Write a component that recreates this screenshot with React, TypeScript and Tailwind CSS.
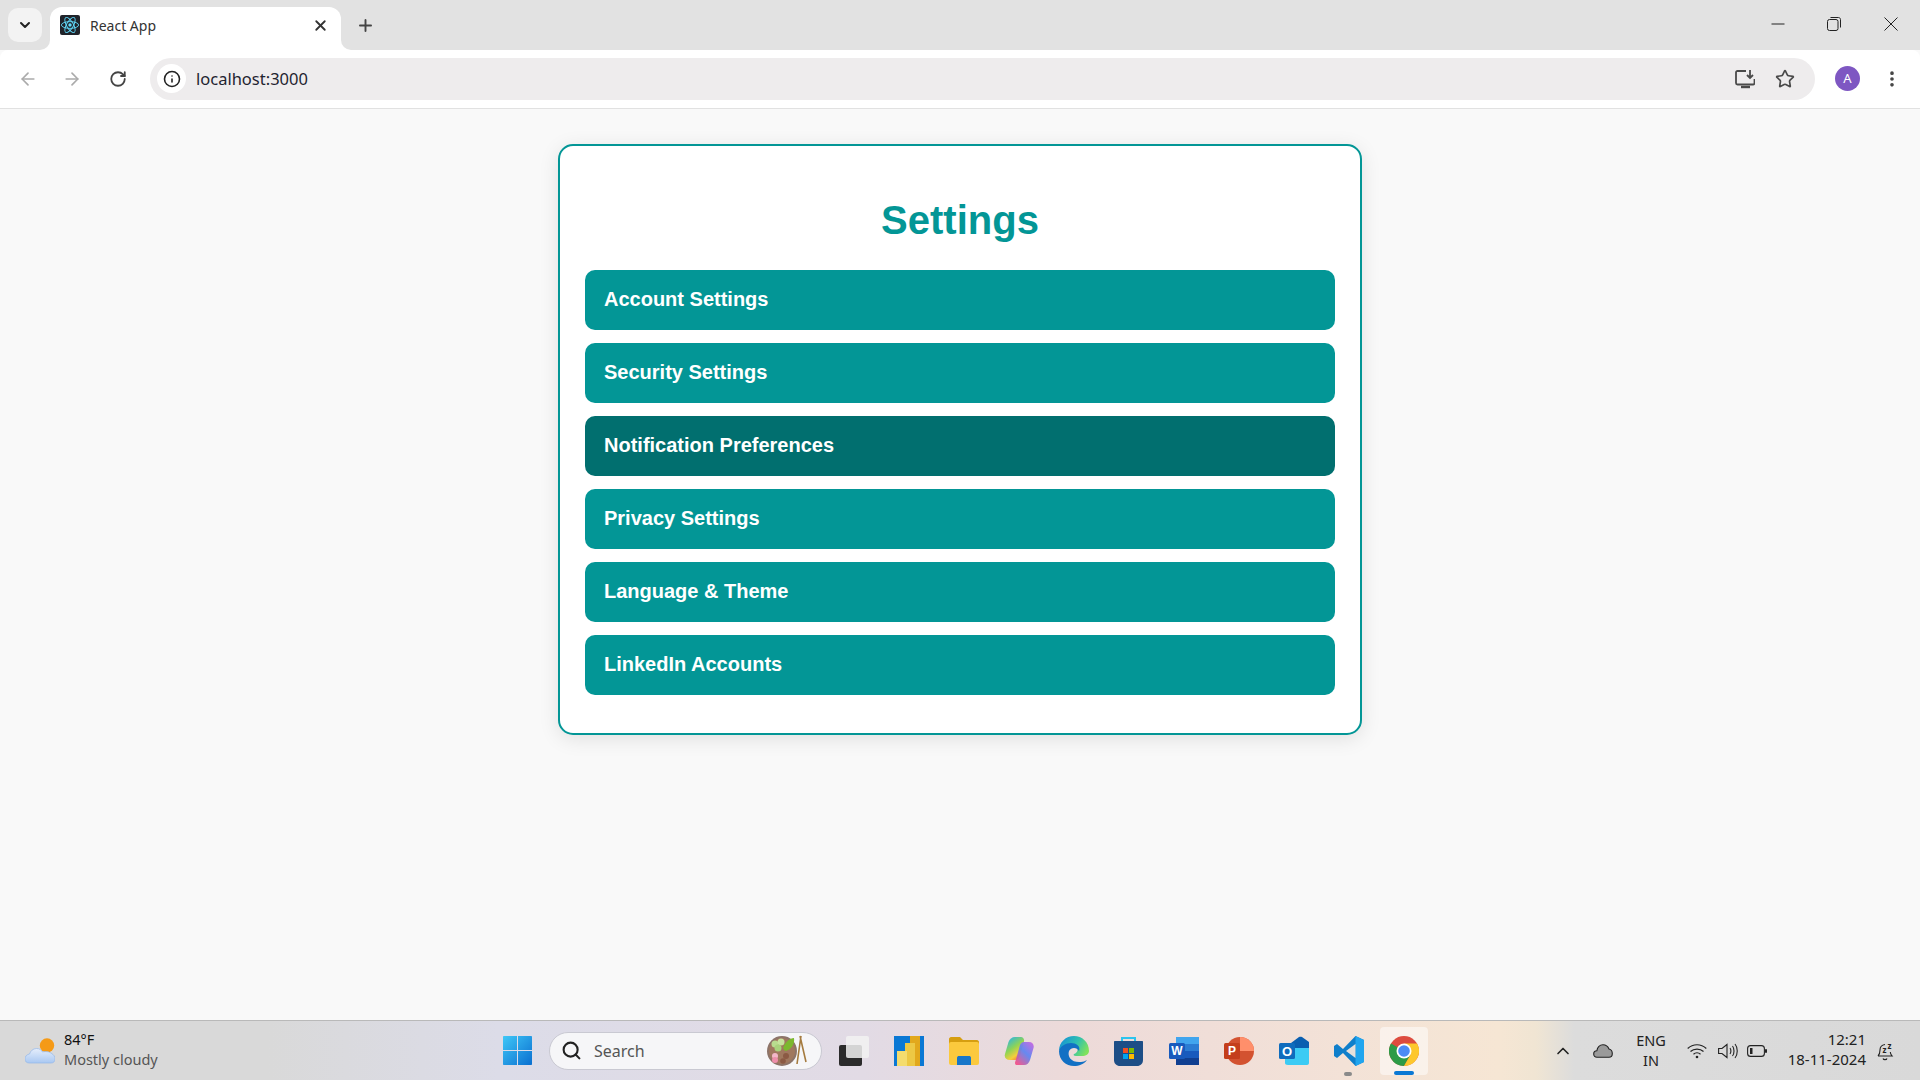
import { ArrowLeft, ArrowRight, ChevronDown, ChevronUp, EllipsisVertical, Info, Plus, RotateCw, Search, Star, X } from "lucide-react";

const settingsItems = [
  "Account Settings",
  "Security Settings",
  "Notification Preferences",
  "Privacy Settings",
  "Language & Theme",
  "LinkedIn Accounts",
];

function ReactIcon() {
  return (
    <svg width="20" height="20" viewBox="0 0 20 20" className="rounded-[2px] bg-[#20232a]">
      <g fill="none" stroke="#61dafb" strokeWidth="0.9">
        <ellipse cx="10" cy="10" rx="8.6" ry="3.4" />
        <ellipse cx="10" cy="10" rx="8.6" ry="3.4" transform="rotate(60 10 10)" />
        <ellipse cx="10" cy="10" rx="8.6" ry="3.4" transform="rotate(120 10 10)" />
      </g>
      <circle cx="10" cy="10" r="1.7" fill="#61dafb" />
    </svg>
  );
}

function BrowserChrome() {
  return (
    <>
      {/* Tab strip */}
      <div className="flex h-[50px] shrink-0 bg-[#e2e2e2]">
        <div className="ml-2 mt-2 flex h-[34px] w-[34px] items-center justify-center rounded-[10px] bg-[#f3f3f3]">
          <ChevronDown size={16} strokeWidth={3} color="#222" />
        </div>
        <div className="relative ml-2 mt-[7px] flex h-[43px] w-[291px] items-center rounded-t-[12px] bg-white pb-[7px] pl-[10px] pr-[12px]">
          <div className="absolute -left-[10px] bottom-0 h-[10px] w-[10px] bg-white">
            <div className="h-full w-full rounded-br-[10px] bg-[#e2e2e2]" />
          </div>
          <div className="absolute -right-[10px] bottom-0 h-[10px] w-[10px] bg-white">
            <div className="h-full w-full rounded-bl-[10px] bg-[#e2e2e2]" />
          </div>
          <ReactIcon />
          <span className="ml-[10px] flex-1 text-[14px] text-[#333]">React App</span>
          <X size={17} strokeWidth={2.6} color="#333" />
        </div>
        <div className="ml-[6px] mt-[7px] flex h-[36px] w-[36px] items-center justify-center">
          <Plus size={19} strokeWidth={2.4} color="#444" />
        </div>
        <div className="ml-auto flex h-[50px] items-start pt-[17px] text-[#222]">
          <svg width="14" height="14" viewBox="0 0 14 14" className="mr-[42px]">
            <path d="M0.5 7H13.5" stroke="#222" strokeWidth="1" />
          </svg>
          <svg width="14" height="14" viewBox="0 0 14 14" className="mr-[43px]">
            <rect x="0.5" y="2.5" width="10.5" height="11" rx="2" fill="none" stroke="#222" />
            <path d="M3.5 0.5H11.5C12.6 0.5 13.5 1.4 13.5 2.5V10.5" fill="none" stroke="#222" />
          </svg>
          <svg width="14" height="14" viewBox="0 0 14 14" className="mr-[22px]">
            <path d="M0.5 0.5L13.5 13.5M13.5 0.5L0.5 13.5" stroke="#222" strokeWidth="1" />
          </svg>
        </div>
      </div>

      {/* Toolbar */}
      <div className="flex h-[59px] shrink-0 items-center rounded-t-[8px] border-b border-[#e1e1e1] bg-white pb-[1px]">
        <ArrowLeft size={20} strokeWidth={2} color="#ababab" className="ml-[18px]" />
        <ArrowRight size={20} strokeWidth={2} color="#ababab" className="ml-[24px]" />
        <RotateCw size={18} strokeWidth={2.4} color="#444" className="ml-[27px]" />
        <div className="ml-[23px] flex h-[42px] w-[1665px] items-center rounded-full bg-[#eeeced] pl-[7px] pr-[20px]">
          <div className="flex h-[29px] w-[29px] items-center justify-center rounded-full bg-white">
            <Info size={18} strokeWidth={2.1} color="#222" />
          </div>
          <span className="ml-[10px] mt-[2px] flex-1 text-[16.5px] text-[#1f2430]">localhost:3000</span>
          <svg width="20" height="20" viewBox="0 0 20 20" fill="none" stroke="#4a4a4a" strokeWidth="1.8" className="mr-[20px]">
            <path d="M11 2H2.5C1.7 2 1 2.7 1 3.5V14C1 14.8 1.700 15.500 2.500 15.500H18C18.800 15.500 19.500 14.800 19.500 14V10" />
            <path d="M15 1V8.500M12 6L15 9L18 6" />
            <path d="M6 18H15" strokeWidth="2.400" />
          </svg>
          <Star size={20} strokeWidth={2} color="#4a4a4a" />
        </div>
        <div className="ml-[20px] flex h-[25px] w-[25px] items-center justify-center rounded-full bg-[#7e57c2] text-[13px] text-white">A</div>
        <EllipsisVertical size={20} strokeWidth={2.4} color="#444" className="ml-[22px]" />
      </div>
    </>
  );
}

function Taskbar() {
  return (
    <div className="flex h-[60px] shrink-0 items-center border-t border-[#b9b9b9] bg-[linear-gradient(90deg,#d9d9d9_0%,#d9d9d9_14%,#dcdce8_26%,#e2dbe5_45%,#eddad9_56%,#f3e2d7_70%,#f6e6d4_78%,#f0e5d3_80%,#dcdcdc_82%,#d9d9d9_100%)]">
      {/* Weather */}
      <div className="flex w-[503px] shrink-0 items-center pl-[25px]">
        <svg width="30" height="26" viewBox="0 0 30 26">
          <defs>
            <linearGradient id="cloud" x1="0" y1="0" x2="0" y2="1">
              <stop offset="0" stopColor="#e6eefb" />
              <stop offset="1" stopColor="#a9c8f2" />
            </linearGradient>
          </defs>
          <circle cx="22" cy="7.500" r="7.200" fill="#f59a16" />
          <path d="M4.500 25C1.500 25 0 23.500 0 21C0 18.500 1.500 16.500 4.500 16C5.500 13 8 10.500 11.500 10.500C14.500 10.500 16.500 12 17.500 14C19 13.500 23 13 26 15C29 17 30 18.500 30 21C30 23.500 28.500 25 26 25Z" fill="url(#cloud)" stroke="#93b8ea" strokeWidth="0.700" />
        </svg>
        <div className="-mt-[3px] ml-[9px] text-[14.500px] leading-[20px]">
          <div className="text-[#111]">84°F</div>
          <div className="text-[#555]">Mostly cloudy</div>
        </div>
      </div>

      {/* Start and search */}
      <svg width="29" height="29" viewBox="0 0 29 29" className="shrink-0">
        <defs>
          <linearGradient id="win" x1="0" y1="0" x2="1" y2="1">
            <stop offset="0" stopColor="#3fc7f7" />
            <stop offset="1" stopColor="#0a6fd0" />
          </linearGradient>
        </defs>
        <path d="M0 1C0 .4 .4 0 1 0H14V14H0ZM15 0H28C28.600 0 29 .4 29 1V14H15ZM0 15H14V29H1C.4 29 0 28.600 0 28ZM15 15H29V28C29 28.600 28.600 29 28 29H15Z" fill="url(#win)" />
      </svg>
      <div className="ml-[17px] flex h-[38px] w-[273px] shrink-0 items-center rounded-full border border-[#c9c9d2] bg-[#f6f6f8] pl-[11px] pr-[14px]">
        <Search size={21} strokeWidth={2.4} color="#222" />
        <span className="ml-[12px] flex-1 text-[16px] text-[#555]">Search</span>
        <svg width="40" height="32" viewBox="0 0 40 32">
          <circle cx="15" cy="16" r="15" fill="#8c7469" />
          <circle cx="15" cy="16" r="13" fill="#a0785f" />
          <circle cx="8" cy="9" r="3.500" fill="#b9dc8f" />
          <circle cx="14" cy="7" r="3.500" fill="#c7e39d" />
          <circle cx="11" cy="13" r="3.500" fill="#a9d27c" />
          <path d="M16 13C18 7 23 3 27 3C28 9 24 15 18 16Z" fill="#7cb82f" />
          <circle cx="8" cy="21" r="3" fill="#f3b7c8" />
          <circle cx="8" cy="25" r="3" fill="#ee8fab" />
          <circle cx="19" cy="21" r="3" fill="#8b5a44" />
          <circle cx="16" cy="26" r="2.800" fill="#8b5a44" />
          <path d="M34 1L30 29M33 1L39 27" stroke="#a57b3f" strokeWidth="1.600" fill="none" />
        </svg>
      </div>

      {/* Pinned apps */}
      <div className="ml-[17px] flex shrink-0 items-center gap-[25px]">
        <svg width="30" height="30" viewBox="0 0 30 30">
          <rect x="0" y="9" width="23" height="21" rx="2" fill="#2b2b2b" />
          <rect x="7" y="0" width="23" height="22" rx="2" fill="#f2f2f2" fillOpacity="0.850" />
        </svg>
        <svg width="30" height="30" viewBox="0 0 30 30">
          <rect width="30" height="30" fill="#0a78d4" />
          <rect x="16" y="0" width="14" height="30" fill="#d08f12" />
          <rect x="16" y="0" width="10" height="30" fill="#e2a81c" />
          <rect x="26" y="0" width="4" height="30" fill="#0a78d4" />
          <rect x="11" y="7" width="10" height="23" fill="#edc844" />
          <rect x="3" y="15" width="10" height="15" fill="#f4dc6e" />
        </svg>
        <svg width="30" height="30" viewBox="0 0 30 30">
          <path d="M0 3C0 2 1 1 2 1H11L14 4H28C29 4 30 5 30 6V10H0Z" fill="#d69e10" />
          <rect x="0" y="6" width="30" height="23" rx="2" fill="#fbc93d" />
          <path d="M8 29V22C8 20.500 9 20 10 20H20C21 20 22 20.500 22 22V29Z" fill="#1776c9" />
        </svg>
        <svg width="30" height="30" viewBox="0 0 30 30">
          <defs>
            <linearGradient id="copilotA" x1="0.200" y1="0" x2="0.800" y2="1">
              <stop offset="0" stopColor="#28b4e8" />
              <stop offset="0.450" stopColor="#8fd455" />
              <stop offset="0.750" stopColor="#f5cf3b" />
              <stop offset="1" stopColor="#f4683a" />
            </linearGradient>
            <linearGradient id="copilotB" x1="1" y1="0" x2="0.200" y2="1">
              <stop offset="0" stopColor="#d05fe0" />
              <stop offset="0.500" stopColor="#5a83f2" />
              <stop offset="1" stopColor="#f0508a" />
            </linearGradient>
          </defs>
          <path d="M11 1H17C19 1 20.500 3 20 5.500L16 20C15 23 13 24 11 24H6C2 24 0 21.500 1 18L4.500 6C5.500 3 8 1 11 1Z" fill="url(#copilotA)" />
          <path d="M20 29H13C11 29 10.500 27 11.500 25L16 9C17 6.500 19 6 21 6H25C28.500 6 30.500 9 29.500 12L26 24C25 27 23 29 20 29Z" fill="url(#copilotB)" fillOpacity="0.920" />
        </svg>
        <svg width="30" height="30" viewBox="0 0 30 30">
          <defs>
            <linearGradient id="edgeA" x1="0" y1="0.200" x2="1" y2="0.600">
              <stop offset="0" stopColor="#1590d8" />
              <stop offset="0.550" stopColor="#2fc0b0" />
              <stop offset="1" stopColor="#80e25c" />
            </linearGradient>
          </defs>
          <path d="M15 0C23 0 30 6 30 15C30 18 27 20 23 20H17C15 20 14 19 15 18C19 17 20 12 16 10C10 8 1 12 0 15C0 6 7 0 15 0Z" fill="url(#edgeA)" />
          <path d="M0 15C1 10 7 7 12 7C17 7 22 10 20 15C18 11 12 11 10 15C8 21 13 27 22 26C24 26 26 25 28 24C25 28 20 30 15 30C7 30 0 24 0 15Z" fill="#1270c4" />
        </svg>
        <svg width="30" height="30" viewBox="0 0 30 30">
          <path d="M8 7V2H21V7" fill="none" stroke="#2cc4ee" strokeWidth="2" />
          <path d="M1 5H28C28.600 5 29 5.400 29 6V24C29 27.500 26.500 30 23 30H6C2.500 30 0 27.500 0 24V6C0 5.400 .4 5 1 5Z" fill="#1d4e86" />
          <rect x="9" y="12" width="5" height="5" fill="#f25022" />
          <rect x="15" y="12" width="5" height="5" fill="#7fba00" />
          <rect x="9" y="18" width="5" height="5" fill="#00a4ef" />
          <rect x="15" y="18" width="5" height="5" fill="#ffb900" />
        </svg>
        <svg width="30" height="30" viewBox="0 0 30 30">
          <rect x="7" y="1" width="23" height="28" rx="1.500" fill="#2b7cd3" />
          <rect x="7" y="1" width="23" height="7" fill="#41a5ee" />
          <rect x="7" y="15" width="23" height="7" fill="#185abd" />
          <rect x="7" y="22" width="23" height="7" fill="#103f91" />
          <rect x="0" y="7" width="16" height="16" rx="1.500" fill="#185abd" />
          <text x="8" y="19" textAnchor="middle" fill="white" fontSize="12" fontWeight="700" fontFamily="'Liberation Sans', sans-serif">W</text>
        </svg>
        <svg width="30" height="30" viewBox="0 0 30 30">
          <circle cx="16" cy="15" r="14" fill="#d35230" />
          <path d="M16 1A14 14 0 0 1 30 15H16Z" fill="#ff8f6b" />
          <rect x="0" y="7" width="16" height="16" rx="1.500" fill="#c43e1c" />
          <text x="8" y="19" textAnchor="middle" fill="white" fontSize="12" fontWeight="700" fontFamily="'Liberation Sans', sans-serif">P</text>
        </svg>
        <svg width="30" height="30" viewBox="0 0 30 30">
          <path d="M8 10L20 1C21 0.500 22 0.500 23 1L30 6V12L18 19Z" fill="#0a5fb0" />
          <path d="M6 12H30V27C30 28 29 29 28 29H9C7 29 6 28 6 27Z" fill="#3ccbf4" />
          <rect x="0" y="7" width="16" height="16" rx="1.500" fill="#0f6cbd" />
          <text x="8" y="19.500" textAnchor="middle" fill="white" fontSize="13" fontWeight="700" fontFamily="'Liberation Sans', sans-serif">O</text>
        </svg>
        <div className="relative h-[30px] w-[30px]">
          <svg width="30" height="30" viewBox="0 0 30 30">
            <path d="M21.500 0L30 4V26L21.500 30L9 17L3 22L0 20V10L3 8L9 13Z" fill="#0f7fcb" />
            <path d="M21.500 0L30 4V26L21.500 30Z" fill="#20a5ef" />
            <path d="M21.500 8L12 15L21.500 22Z" fill="#e6e0dc" />
          </svg>
          <div className="absolute -bottom-[10px] left-[10px] h-[4px] w-[8px] rounded-full bg-[#8a8a8a]" />
        </div>
        <div className="relative h-[30px] w-[30px]">
          <div className="absolute -left-[9px] -top-[9px] h-[48px] w-[48px] rounded-[4px] bg-white/50" />
          <svg width="30" height="30" viewBox="0 0 30 30" className="relative">
            <circle cx="15" cy="15" r="15" fill="#dd4b3e" />
            <path d="M15 15L2 7.500A15 15 0 0 0 15 30L21.500 18.800Z" fill="#2d9b46" />
            <path d="M15 7.500H28A15 15 0 0 1 15 30L21.500 18.800Z" fill="#fdc72d" />
            <circle cx="15" cy="15" r="7.500" fill="white" />
            <circle cx="15" cy="15" r="5.800" fill="#4c8bf5" />
          </svg>
          <div className="absolute -bottom-[9px] left-[5px] h-[4px] w-[20px] rounded-full bg-[#0a78d4]" />
        </div>
      </div>

      {/* System tray */}
      <div className="ml-[134px] flex shrink-0 items-center">
        <ChevronUp size={20} strokeWidth={2} color="#222" />
        <svg width="20" height="14" viewBox="0 0 20 14" className="ml-[20px]">
          <path d="M4 13.300C2 13.300 .7 12 .7 10C.7 8 2 6.800 3.800 6.800C4.500 3 7 .7 10 .7C13 .7 15 2.500 16 5C18 5.500 19.300 7.500 19.300 9.500C19.300 12 17.800 13.300 16 13.300Z" fill="#9a9a9a" stroke="#222" strokeWidth="1.100" />
        </svg>
        <div className="-mt-[2px] ml-[20px] w-[36px] text-center text-[14.500px] leading-[20px] text-[#222]">
          <div>ENG</div>
          <div>IN</div>
        </div>
        <svg width="20" height="16" viewBox="0 0 20 16" fill="none" stroke="#222" strokeWidth="1.200" className="ml-[18px]">
          <path d="M.7 5.500C6 .5 14 .5 19.300 5.500M3.500 8.500C7 5.200 13 5.200 16.500 8.500M6.500 11.300C8.500 9.500 11.500 9.500 13.500 11.300" />
          <circle cx="10" cy="14" r="1.300" fill="#222" stroke="none" />
        </svg>
        <svg width="20" height="16" viewBox="0 0 20 16" fill="none" stroke="#222" strokeWidth="1.100" className="ml-[11px]">
          <path d="M.6 5.500H4L9 1.500V14.500L4 10.500H.6Z" />
          <path d="M12 5C13.200 6.500 13.200 9.500 12 11M14.500 3C16.500 5.500 16.500 10.500 14.500 13M17 1C20 4.500 20 11.500 17 15" />
        </svg>
        <svg width="20" height="12" viewBox="0 0 20 12" className="ml-[9px]">
          <rect x=".6" y=".6" width="16.800" height="10.800" rx="3" fill="none" stroke="#222" strokeWidth="1.100" />
          <rect x="3" y="3" width="2.500" height="6" fill="#222" />
          <rect x="18" y="4" width="2" height="4" rx="1" fill="#222" />
        </svg>
        <div className="-mt-[3px] ml-[12px] w-[87px] text-right text-[15px] leading-[20px] text-[#222]">
          <div>12:21</div>
          <div>18-11-2024</div>
        </div>
        <svg width="18" height="20" viewBox="0 0 18 20" fill="none" stroke="#222" strokeWidth="1.100" className="ml-[11px] overflow-visible">
          <path d="M1 15C2.500 13.500 3 12 3 9C3 6 5 4 8 3.500M1 15H15C14 14 13.500 13 13.300 11" />
          <path d="M6 17.500C6.500 19 9.500 19 10 17.500" />
          <text x="5.500" y="12" fontSize="8" fontWeight="700" fill="#222" stroke="none" fontFamily="'Noto Sans', sans-serif">z</text>
          <text x="10.500" y="8" fontSize="8" fontWeight="700" fill="#222" stroke="none" fontFamily="'Noto Sans', sans-serif">z</text>
        </svg>
      </div>
    </div>
  );
}

export default function App() {
  return (
    <div className="flex h-screen flex-col overflow-hidden bg-[#f9f9f9] font-['Noto_Sans',sans-serif]">
      <BrowserChrome />

      <main className="flex-1">
        <section className="mx-auto mt-[35px] w-[804px] rounded-[15px] border-2 border-[#039696] bg-white px-[25px] pb-[25px] pt-[41px] font-['Liberation_Sans',Arial,sans-serif] shadow-[0_4px_20px_rgba(0,0,0,0.1)]">
          <h1 className="mb-[27px] mt-[10px] text-center text-[40px] font-bold leading-[46px] text-[#039696]">Settings</h1>
          <div className="flex flex-col">
            {settingsItems.map((item) => (
              <button
                key={item}
                className={`mb-[13px] h-[60px] rounded-[10px] pb-[2px] pl-[19px] text-left text-[20px] font-bold text-white ${
                  item === "Notification Preferences" ? "bg-[#016f6f]" : "bg-[#039696]"
                }`}
              >
                {item}
              </button>
            ))}
          </div>
        </section>
      </main>

      <Taskbar />
    </div>
  );
}
